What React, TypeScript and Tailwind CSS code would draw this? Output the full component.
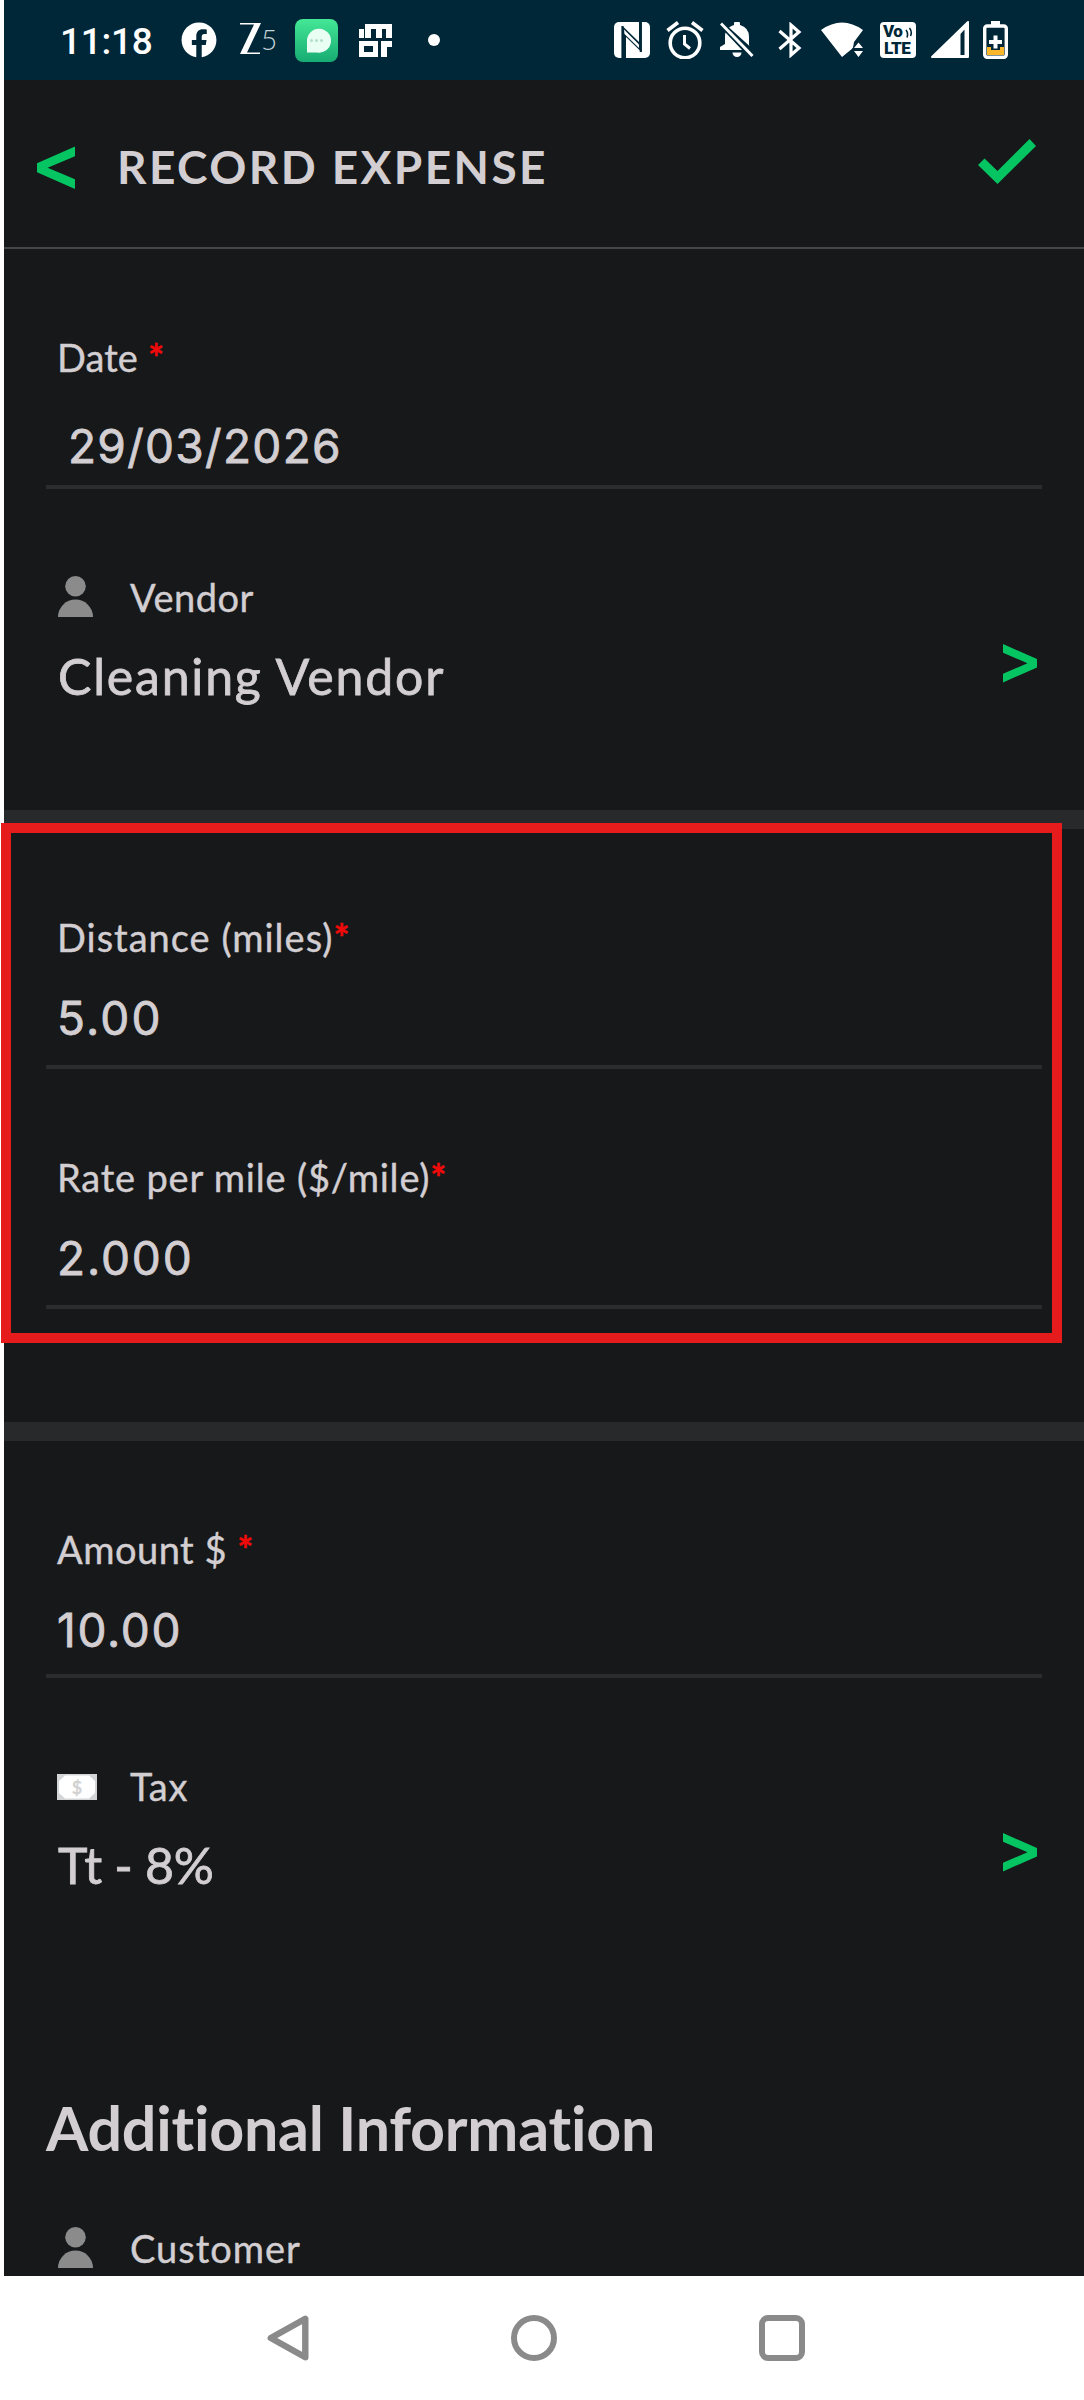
import type { ReactNode } from 'react';
import { FaFacebook } from 'react-icons/fa';

function Required() {
    return <span className="text-[#f00a0a] font-bold">*</span>;
}

function Chevron({ className }: { className: string }) {
    return (
        <svg viewBox="0 0 34 40" preserveAspectRatio="none" className={className} fill="#05c462">
            <path d="M0 0L34 15.5V24L0 39.5V30.5L24.5 19.8L0 9Z" />
        </svg>
    );
}

function PersonIcon() {
    return (
        <svg viewBox="0 0 35 41" className="w-[35px] h-[41px] mt-[3px]" fill="#8b8b8b">
            <circle cx="17.5" cy="10.3" r="10.3" />
            <path d="M0 41A17.5 17.5 0 0 1 35 41Z" />
        </svg>
    );
}

function MoneyIcon() {
    return (
        <svg viewBox="0 0 40 26" className="w-10 h-[26px] mt-3 -ml-px">
            <rect width="40" height="26" fill="#d3d5d6" />
            <path d="M8 1.5H32L38 7V19L32 24.5H8L2 19V7Z" fill="#fff" />
            <text x="20" y="19.5" textAnchor="middle" fontFamily="Lato, sans-serif" fontSize="18" fill="#d0d0d0" stroke="#d0d0d0" strokeWidth="0.6">
                $
            </text>
        </svg>
    );
}

function StatusBar() {
    return (
        <div className="h-20 bg-[#002738] flex items-center text-white">
            <span className="ml-[56px] w-[101px] font-['Roboto'] font-medium text-[37px] leading-none tracking-[-0.3px] pt-0.5">11:18</span>
            <FaFacebook className="ml-5 w-9 h-9" />
            <div className="ml-[23px] w-[37px] flex items-baseline leading-none font-['Lato']">
                <svg viewBox="0 0 21 31" className="w-[21px] h-[31px] shrink-0" fill="#fff">
                    <path d="M0 0H21L7 29.5H20V31H0L14 1.5H0Z" />
                </svg>
                <span className="text-[28px] font-light text-[#c8d2d8] -translate-y-1">5</span>
            </div>
            <svg viewBox="0 0 43 43" className="ml-[18px] w-[43px] h-[43px]">
                <defs>
                    <linearGradient id="chat" x1="0" y1="0" x2="0" y2="1">
                        <stop offset="0" stopColor="#44e796" />
                        <stop offset="1" stopColor="#17ac73" />
                    </linearGradient>
                </defs>
                <rect width="43" height="43" rx="8" fill="url(#chat)" />
                <path d="M12 33.5V22A12 12 0 1 1 22 33.5Z" fill="#e9fff4" />
                <g fill="#b3dfcb">
                    <circle cx="16.5" cy="21.5" r="1.5" />
                    <circle cx="21.5" cy="21.5" r="1.5" />
                    <circle cx="26.5" cy="21.5" r="1.5" />
                </g>
            </svg>
            <svg viewBox="0 0 33 33" className="ml-[21px] w-[33px] h-[33px]" fill="#fff">
                <path d="M6 0H33V14H27V5H23V14H17V5H12V14H6Z" />
                <path d="M0 5H5V14H0Z" />
                <path fillRule="evenodd" d="M0 17H19V33H0ZM5 22V28H14V22Z" />
                <path d="M22 17H33V23H28V33H22Z" />
            </svg>
            <span className="ml-9 w-3 h-3 rounded-full bg-white" />

            {/* nfc */}
            <svg viewBox="0 0 36 36" className="ml-[174px] w-9 h-9">
                <rect width="36" height="36" rx="5" fill="#fff" />
                <path d="M8.5 36V4L25 20V0H27.5V30L12 15V36Z" fill="#002738" />
                <path d="M10 7.5L25 22.5V26L10.5 12Z" fill="#fff" />
                <path d="M8.5 36V4M26.8 0V30" stroke="#002738" strokeWidth="2.2" />
            </svg>
            {/* alarm */}
            <svg viewBox="0 0 38 38" className="ml-4 w-[38px] h-[38px]" fill="none" stroke="#fff">
                <circle cx="19" cy="22" r="14.8" strokeWidth="3.6" />
                <path d="M1.5 9.5L12 1.5M36.5 9.5L26 1.5" strokeWidth="3.6" />
                <path d="M18.5 14V23L24 27.5" strokeWidth="3" />
            </svg>
            {/* notifications off */}
            <svg viewBox="0 0 34 36" className="ml-4 w-[34px] h-9" fill="#fff">
                <path d="M9 5.5Q11.5 3.5 14 3V2A3 3 0 0 1 20 2V3Q29 5.5 29 15V23L29.5 24Z" />
                <path d="M5.5 10.5L22 28H0V25L5 22V14Q5 12 5.5 10.5Z" />
                <path d="M12.5 30.5H21.5A4.5 4.5 0 0 1 12.5 30.5Z" />
                <path d="M1 1.5L32.5 34" stroke="#fff" strokeWidth="3" />
            </svg>
            {/* bluetooth */}
            <svg viewBox="0 0 24 36" className="ml-6 w-6 h-9" fill="none" stroke="#fff" strokeWidth="3.2">
                <path d="M1.5 9L21 26L13 33V3L21 10L1.5 27" />
            </svg>
            {/* wifi */}
            <svg viewBox="0 0 42 36" className="ml-[19px] w-[42px] h-9" fill="#fff">
                <path d="M0 8Q21 -7 42 8L33 20L32 26L21 35Z" />
                <path d="M31 27L37.5 18L45 27V36H31Z" fill="#002738" />
                <path d="M33 26L37.5 20.5L42 26ZM33 29H42L37.5 35Z" />
            </svg>
            {/* volte */}
            <div className="relative ml-[17px] w-9 h-9 rounded bg-white text-[#002738] font-['Roboto'] font-black overflow-hidden">
                <div className="h-[17px] mt-px pl-[3px] text-[17px] leading-[17px] tracking-[-0.5px]">Vo</div>
                <div className="h-[17px] pl-[4px] text-[17px] leading-[17px] tracking-[-0.5px]">LTE</div>
                <svg viewBox="0 0 8 12" className="absolute left-[25px] top-[5px] w-2 h-3" fill="none" stroke="#002738" strokeWidth="1.6">
                    <path d="M1 3Q3.5 6 2 10.5M4.5 1Q7.5 5 5.5 9" />
                </svg>
            </div>
            {/* signal */}
            <svg viewBox="0 0 38 38" className="ml-[15px] w-[38px] h-[38px]">
                <path d="M37 1V36H1Z" fill="#fff" stroke="#fff" strokeWidth="2" strokeLinejoin="round" />
                <path d="M29.5 13L33.5 8.5V34H29.5Z" fill="#002738" />
            </svg>
            {/* battery */}
            <svg viewBox="0 0 25 38" className="ml-3.5 w-[25px] h-[38px]">
                <path d="M8 0H17V6H8Z" fill="#fff" />
                <rect x="1.7" y="5" width="21.6" height="31.3" rx="2.5" fill="#002738" stroke="#fff" strokeWidth="3.4" />
                <path d="M4 26H21V34H4Z" fill="#fbb62a" />
                <path d="M8 24H17V29H8Z" fill="#002738" />
                <path d="M10.5 14.5H14.5V19H19V23H14.5V27.5H10.5V23H6V19H10.5Z" fill="#fff" />
            </svg>
        </div>
    );
}

function Label({ children, tracking }: { children: ReactNode; tracking: string }) {
    return (
        <div className={`text-[38px] leading-[48px] whitespace-pre [-webkit-text-stroke:0.4px_currentColor] ${tracking}`}>
            {children}
        </div>
    );
}

interface FieldProps {
    label: ReactNode;
    labelTracking: string;
    value: string;
    valueClass: string;
}

function Field({ label, labelTracking, value, valueClass }: FieldProps) {
    return (
        <div className="mt-[84px] ml-[42px] w-[996px] border-b-4 border-[#2b2c2d]">
            <div className="pl-[11px]">
                <Label tracking={labelTracking}>{label}</Label>
                <div className={`font-['Inter'] text-[46px] leading-[56px] [-webkit-text-stroke:0.8px_currentColor] ${valueClass}`}>
                    {value}
                </div>
            </div>
        </div>
    );
}

interface PickerProps {
    icon: ReactNode;
    label: string;
    labelTracking: string;
    value: string;
    valueTracking: string;
}

function Picker({ icon, label, labelTracking, value, valueTracking }: PickerProps) {
    return (
        <div className="mt-[84px] flex justify-between">
            <div className="pl-[54px]">
                <div className="flex">
                    <div className="w-[72px]">{icon}</div>
                    <Label tracking={labelTracking}>{label}</Label>
                </div>
                <div className={`mt-[25px] text-[50px] leading-[60px] [-webkit-text-stroke:0.8px_currentColor] ${valueTracking}`}>
                    {value}
                </div>
            </div>
            <Chevron className="w-[34px] h-[39px] mt-[71px] mr-[47px]" />
        </div>
    );
}

function NavBar() {
    return (
        <div className="h-[124px] bg-white flex items-center justify-center pr-[12px] pb-[1px]">
            <svg viewBox="0 0 42 46" className="w-[42px] h-[46px]" fill="none" stroke="#8a8a8a" strokeWidth="6.4" strokeLinejoin="round">
                <path d="M38.3 3.8V42.2L3.8 23Z" />
            </svg>
            <span className="ml-[202px] w-[46px] h-[46px] rounded-full border-[6.5px] border-[#8a8a8a]" />
            <span className="ml-[202px] w-[46px] h-[46px] rounded-[9px] border-[6.5px] border-[#8a8a8a]" />
        </div>
    );
}

function App() {
    return (
        <div className="relative w-[1084px] h-[2400px] overflow-hidden bg-white font-['Lato',sans-serif] text-[#d2ced1] [font-variant-ligatures:none]">
            <div className="ml-1 h-[2276px] bg-[#17181a] overflow-hidden">
                <StatusBar />
                <div className="h-[169px] border-b-2 border-[#444547] flex items-start">
                    <Chevron className="w-[38px] h-[43px] ml-[33px] mt-[66px] rotate-180" />
                    <h1 className="ml-[42px] mt-[59px] text-[46px] leading-[56px] font-bold tracking-[2.4px]">RECORD EXPENSE</h1>
                    <svg viewBox="0 0 58 45" className="w-[58px] h-[45px] ml-auto mr-12 mt-[59px]" fill="#05c462">
                        <path d="M0 26L6.5 19.5L19.5 32L51.5 0L58 7L19.5 45Z" />
                    </svg>
                </div>
                <Field
                    label={<>Date <Required /></>}
                    labelTracking="tracking-[0.1px]"
                    value="29/03/2026"
                    valueClass="mt-[37px] pl-[11px] pb-[11px] tracking-[1.3px]"
                />
                <Picker
                    icon={<PersonIcon />}
                    label="Vendor"
                    labelTracking="tracking-[0.5px]"
                    value="Cleaning Vendor"
                    valueTracking="tracking-[1.8px]"
                />
                <div className="mt-[104px] h-[19px] bg-[#28292b]" />
                <Field
                    label={<>Distance (miles)<Required /></>}
                    labelTracking="tracking-[1px]"
                    value="5.00"
                    valueClass="mt-[29px] pb-[19px] tracking-[2.2px]"
                />
                <Field
                    label={<>Rate per mile ($/mile)<Required /></>}
                    labelTracking="tracking-[0.8px]"
                    value="2.000"
                    valueClass="mt-[29px] pb-[19px] tracking-[1.9px]"
                />
                <div className="mt-[113px] h-[19px] bg-[#28292b]" />
                <Field
                    label={<>Amount $ <Required /></>}
                    labelTracking="tracking-[0.5px]"
                    value="10.00"
                    valueClass="mt-[29px] pb-[16px] tracking-[1.7px]"
                />
                <Picker
                    icon={<MoneyIcon />}
                    label="Tax"
                    labelTracking="tracking-[0.7px]"
                    value="Tt - 8%"
                    valueTracking="tracking-[-0.3px]"
                />
                <h2 className="mt-[197px] ml-[42px] text-[61px] leading-[72px] font-bold tracking-[-0.25px]">Additional Information</h2>
                <div className="mt-[60px] ml-[54px] flex">
                    <div className="w-[72px]">
                        <PersonIcon />
                    </div>
                    <Label tracking="tracking-[1px]">Customer</Label>
                </div>
            </div>
            <NavBar />
            {/* highlight over the mileage fields */}
            <div className="absolute left-px top-[823px] w-[1061px] h-[520px] border-[10px] border-[#e61c1c]" />
        </div>
    );
}

export default App;
